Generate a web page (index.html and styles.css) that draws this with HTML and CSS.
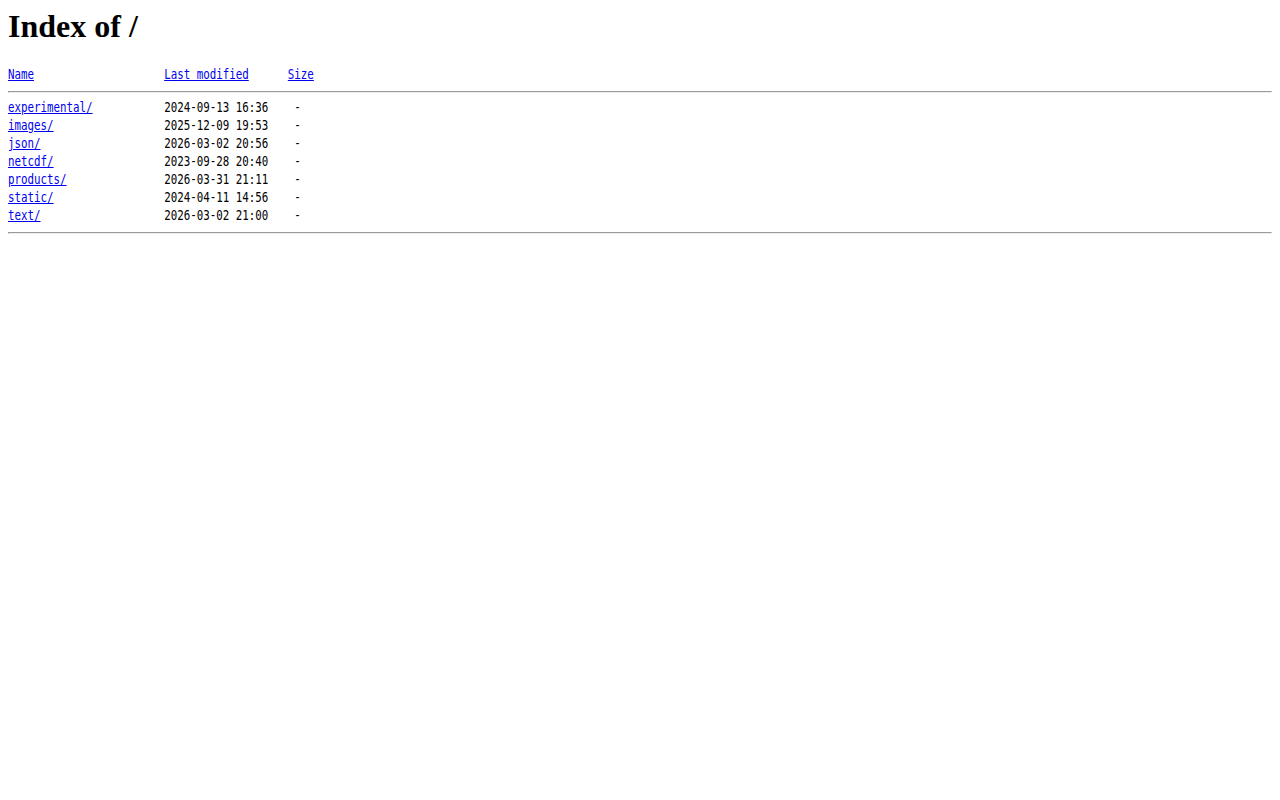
FILE: index.html
```html
<!DOCTYPE html>
<html>
<head>
<meta charset="utf-8">
<title>Index of /</title>
<link rel="stylesheet" href="styles.css">
</head>
<body>
<h1 class="title">Index of /</h1>
<div class="listing">
  <div class="line"><a href="?C=N;O=D">Name</a>                    <a href="?C=M;O=A">Last modified</a>      <a href="?C=S;O=A">Size</a></div>
</div>
<hr class="rule">
<div class="listing">
  <div class="line"><a href="experimental/">experimental/</a>           2024-09-13 16:36    -</div>
  <div class="line"><a href="images/">images/</a>                 2025-12-09 19:53    -</div>
  <div class="line"><a href="json/">json/</a>                   2026-03-02 20:56    -</div>
  <div class="line"><a href="netcdf/">netcdf/</a>                 2023-09-28 20:40    -</div>
  <div class="line"><a href="products/">products/</a>               2026-03-31 21:11    -</div>
  <div class="line"><a href="static/">static/</a>                 2024-04-11 14:56    -</div>
  <div class="line"><a href="text/">text/</a>                   2026-03-02 21:00    -</div>
</div>
<hr class="rule">
</body>
</html>
```

FILE: styles.css
```css
body {
  margin: 8px;
  background: #fff;
  color: #000;
}

.title {
  font-family: "Liberation Serif", serif;
  font-size: 32px;
  font-weight: bold;
  margin: 0 0 22px;
  line-height: 36px;
}

.listing {
  font-family: "DejaVu Sans Mono", monospace;
  font-size: 14px;
  line-height: 16px;
}

/* narrow monospace columns: 6.5px per character */
.line {
  white-space: pre;
  padding-bottom: 2px;
  transform: scaleX(0.772);
  transform-origin: left center;
}

.listing a {
  color: #0000ee;
}

.rule {
  margin: 7px 0 6px;
}
```
